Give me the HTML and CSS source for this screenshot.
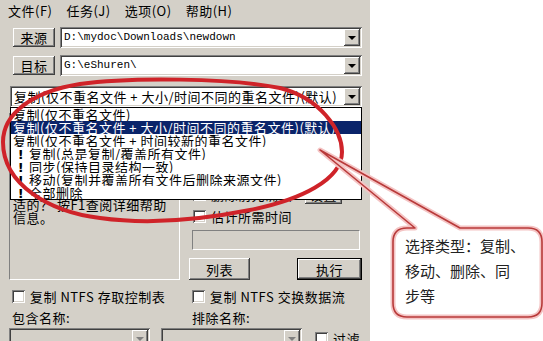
FILE: index.html
```html
<!DOCTYPE html>
<html lang="zh-CN">
<head>
    <meta charset="UTF-8">
    <title>任务设置</title>
    <link rel="stylesheet" href="styles.css">
</head>
<body>
    <div class="window">
        <div class="menubar">
            <span class="menu">文件(F)</span>
            <span class="menu">任务(J)</span>
            <span class="menu">选项(O)</span>
            <span class="menu">帮助(H)</span>
        </div>

        <div class="row first">
            <button class="btn small">来源</button>
            <div class="combo">
                <span class="combo-text mono">D:\mydoc\Downloads\newdown</span>
                <span class="arrow"></span>
            </div>
        </div>
        <div class="row second">
            <button class="btn small">目标</button>
            <div class="combo">
                <span class="combo-text mono">G:\eShuren\</span>
                <span class="arrow"></span>
            </div>
        </div>
        <div class="row type-row">
            <div class="combo wide">
                <span class="combo-text">复制(仅不重名文件 + 大小/时间不同的重名文件)(默认)</span>
                <span class="arrow"></span>
            </div>
        </div>

        <div class="middle">
            <div class="info">
                <div>任务类型说明：</div>
                <div>复制：将来源文件复制到</div>
                <div>目标目录中。</div>
                <div>同步：保持来源和目标的</div>
                <div>目录结构一致。</div>
                <div>不清楚哪一种类型是合</div>
                <div>适的？ 按F1查阅详细帮助</div>
                <div>信息。</div>
            </div>
            <div class="side">
                <label class="check"><span class="box"></span>包含子目录</label>
                <div class="check-line">
                    <label class="check"><span class="box"></span>删除前先确认</label>
                    <button class="btn tiny">设置</button>
                </div>
                <label class="check"><span class="box"></span>估计所需时间</label>
                <div class="progress"></div>
                <div class="actions">
                    <button class="btn action">列表</button>
                    <button class="btn action default">执行</button>
                </div>
            </div>
        </div>

        <div class="checks">
            <label class="check"><span class="box"></span>复制 NTFS 存取控制表</label>
            <label class="check"><span class="box"></span>复制 NTFS 交换数据流</label>
        </div>
        <div class="labels">
            <span>包含名称:</span>
            <span>排除名称:</span>
        </div>
        <div class="filters">
            <div class="combo short disabled"><span class="combo-text"></span><span class="arrow"></span></div>
            <div class="combo short disabled"><span class="combo-text"></span><span class="arrow"></span></div>
            <label class="check"><span class="box"></span>过滤</label>
        </div>

        <!-- 下拉列表（展开状态） -->
        <ul class="droplist">
            <li>复制(仅不重名文件)</li>
            <li class="selected">复制(仅不重名文件 + 大小/时间不同的重名文件)(默认)</li>
            <li>复制(仅不重名文件 + 时间较新的重名文件)</li>
            <li><span class="bang">!</span>复制(总是复制/覆盖所有文件)</li>
            <li><span class="bang">!</span>同步(保持目录结构一致)</li>
            <li><span class="bang">!</span>移动(复制并覆盖所有文件后删除来源文件)</li>
            <li><span class="bang">!</span>全部删除</li>
        </ul>
    </div>

    <div class="callout">选择类型：复制、<br>移动、删除、同<br>步等</div>

    <svg class="marks" width="543" height="341" viewBox="0 0 543 341">
        <!-- 手绘红圈 -->
        <path d="M3 142 C3 115 30 92 80 84 C130 77 230 78 280 88 C320 98 342 130 342 152 C342 180 300 200 250 210 C200 220 150 225 100 218 C50 212 3 185 3 142 Z"
              fill="none" stroke="#cf2329" stroke-width="4"/>
        <!-- 标注框 -->
        <path d="M407 228 L415 228 L320 150 L460 228 L528 228 Q542 228 542 242 L542 303 Q542 317 528 317 L407 317 Q393 317 393 303 L393 242 Q393 228 407 228 Z"
              fill="none" stroke="#f4c4c4" stroke-width="5" stroke-linejoin="round"/>
        <path d="M407 228 L415 228 L320 150 L460 228 L528 228 Q542 228 542 242 L542 303 Q542 317 528 317 L407 317 Q393 317 393 303 L393 242 Q393 228 407 228 Z"
              fill="none" stroke="#b83a3a" stroke-width="1.6" stroke-linejoin="round"/>
    </svg>
</body>
</html>
```

FILE: styles.css
```css
body {
    margin: 0;
    background: #fff;
    font-family: "Noto Sans CJK SC", sans-serif;
    font-size: 13px;
    letter-spacing: 0.5px;
    color: #000;
    overflow: hidden;
}
.window {
    position: relative;
    width: 370px;
    height: 341px;
    background: #d4d0c8;
    overflow: hidden;
}
.menubar {
    display: flex;
    gap: 14px;
    height: 22px;
    line-height: 22px;
    padding-left: 8px;
}
.row {
    display: flex;
    align-items: center;
    gap: 5px;
    padding-left: 13px;
}
.row.first {
    margin-top: 5px;
}
.row.second {
    margin-top: 7px;
}
.row.type-row {
    margin-top: 10px;
    padding-left: 10px;
}
.btn {
    font-family: inherit;
    font-size: 13px;
    line-height: 13px;
    letter-spacing: 0.5px;
    color: #000;
    background: #d4d0c8;
    border: none;
    padding: 0;
    box-shadow: inset -1px -1px #404040, inset 1px 1px #fff, inset -2px -2px #808080, inset 2px 2px #d4d0c8;
}
.btn.small {
    width: 42px;
    height: 19px;
}
.btn.tiny {
    width: 37px;
    height: 19px;
}
.btn.action {
    height: 22px;
}
.btn.default {
    box-shadow: inset 0 0 0 1px #000, inset -2px -2px #404040, inset 2px 2px #fff, inset -3px -3px #808080;
}
.combo {
    display: flex;
    align-items: center;
    box-sizing: border-box;
    width: 302px;
    height: 21px;
    padding: 2px;
    background: #fff;
    box-shadow: inset 1px 1px #808080, inset -1px -1px #fff, inset 2px 2px #404040, inset -2px -2px #d4d0c8;
}
.combo.wide {
    width: 352px;
}
.combo.short {
    width: 141px;
}
.combo.disabled {
    background: #d4d0c8;
}
.combo-text {
    flex: 1;
    padding-left: 2px;
    line-height: 17px;
    white-space: nowrap;
    overflow: hidden;
}
.mono {
    font-family: "Liberation Mono", monospace;
    font-size: 11px;
    letter-spacing: 0;
}
.arrow {
    position: relative;
    width: 16px;
    height: 17px;
    background: #d4d0c8;
    box-shadow: inset -1px -1px #404040, inset 1px 1px #fff, inset -2px -2px #808080;
}
.arrow::after {
    content: "";
    position: absolute;
    left: 4px;
    top: 7px;
    border-left: 4px solid transparent;
    border-right: 4px solid transparent;
    border-top: 4px solid #000;
}
.disabled .arrow::after {
    border-top-color: #808080;
}
.middle {
    display: flex;
    margin-top: 6px;
    padding-left: 9px;
    height: 167px;
}
.info {
    box-sizing: border-box;
    width: 171px;
    height: 167px;
    padding: 6px 3px;
    line-height: 13px;
    border: 1px solid;
    border-color: #808080 #fff #fff #808080;
    white-space: nowrap;
}
.side {
    display: flex;
    flex-direction: column;
    justify-content: flex-end;
    width: 173px;
    margin-left: 9px;
}
.side > .check {
    margin-left: 4px;
}
.check-line {
    display: flex;
    justify-content: space-between;
    align-items: center;
    height: 19px;
    margin: 8px 20px 6px 4px;
}
.check {
    display: flex;
    align-items: center;
    gap: 5px;
    height: 13px;
    line-height: 13px;
    white-space: nowrap;
}
.box {
    display: inline-block;
    width: 13px;
    height: 13px;
    background: #fff;
    box-shadow: inset 1px 1px #808080, inset -1px -1px #fff, inset 2px 2px #404040, inset -2px -2px #d4d0c8;
}
.progress {
    height: 18px;
    margin: 7px 2px 8px 3px;
    border: 1px solid;
    border-color: #808080 #fff #fff #808080;
}
.actions {
    display: flex;
    justify-content: space-between;
}
.actions .btn:first-child {
    width: 61px;
}
.actions .btn.default {
    width: 65px;
}
.checks,
.labels {
    display: grid;
    grid-template-columns: 180px 1fr;
    padding-left: 12px;
}
.checks {
    margin-top: 10px;
}
.labels {
    margin-top: 8px;
    line-height: 13px;
}
.filters {
    display: flex;
    align-items: center;
    gap: 11px;
    margin-top: 4px;
    padding-left: 9px;
}
.filters .check {
    margin-left: 2px;
}
.droplist {
    position: absolute;
    left: 10px;
    top: 107px;
    box-sizing: border-box;
    width: 352px;
    height: 93px;
    margin: 0;
    padding: 0;
    list-style: none;
    background: #fff;
    border: 1px solid #000;
}
.droplist li {
    height: 13px;
    line-height: 13px;
    padding-left: 2px;
    white-space: nowrap;
    overflow: hidden;
}
.droplist li.selected {
    background: #0a246a;
    color: #fff;
}
.bang {
    display: inline-block;
    width: 16px;
    text-align: center;
    font-family: "DejaVu Sans", sans-serif;
    font-weight: bold;
}
.callout {
    position: absolute;
    left: 393px;
    top: 228px;
    box-sizing: border-box;
    width: 149px;
    height: 89px;
    padding: 5px 6px 0 12px;
    border-radius: 14px;
    background: #fff;
    font-size: 15px;
    line-height: 25px;
    letter-spacing: 0;
    color: #222;
}
.marks {
    position: absolute;
    left: 0;
    top: 0;
    pointer-events: none;
}
```
